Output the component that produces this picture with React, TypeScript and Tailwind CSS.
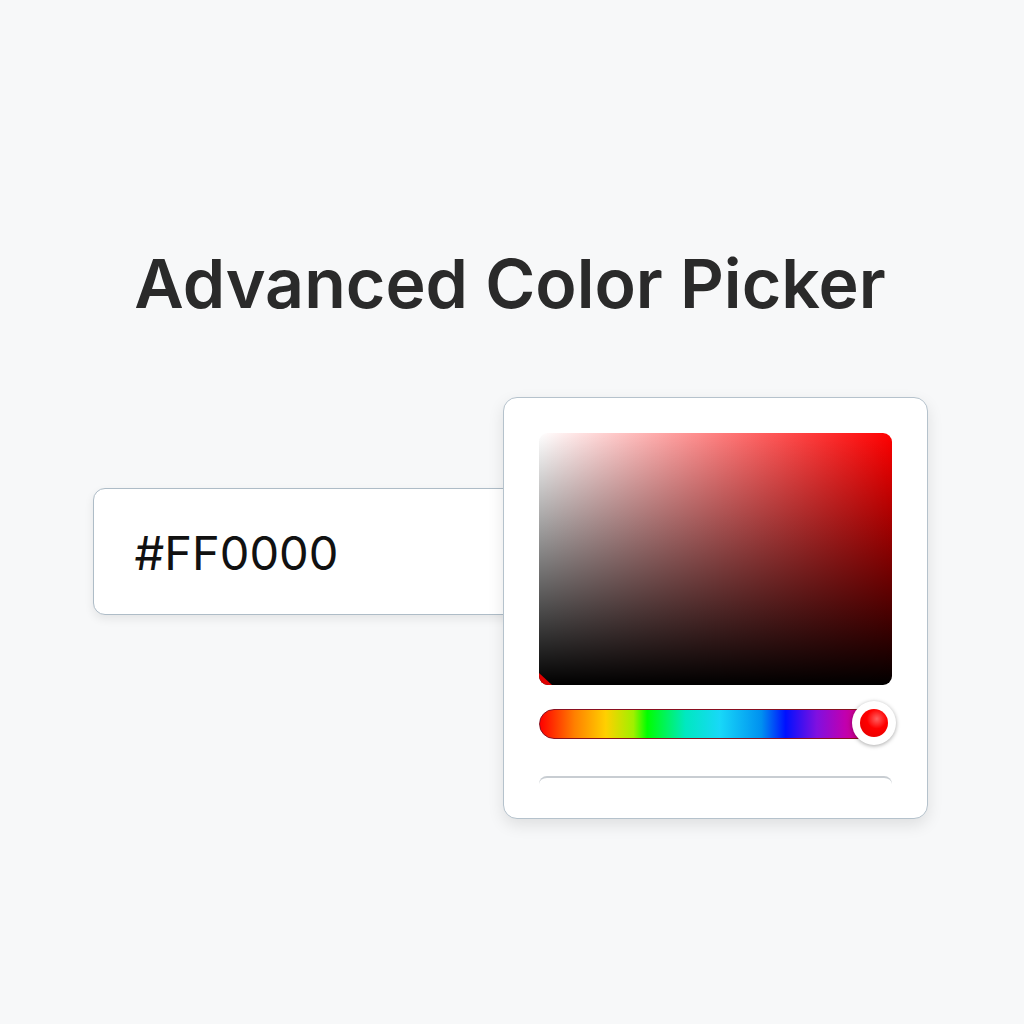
import React from "react";

export default function App() {
  return (
    <div className="min-h-[1024px] w-full bg-[#f7f8f9] flex flex-col items-center" style={{ fontFamily: "Inter, 'Noto Sans', sans-serif" }}>
      <h1 className="mt-[244px] text-[68px] leading-[78px] font-semibold text-[#2a2a2a] tracking-[0px] -translate-x-[2px]">
        Advanced Color Picker
      </h1>
      <div className="relative mt-[75px] w-[835px] h-[422px] -translate-x-[2px]">
        <div className="mt-[91px] w-[440px] h-[127px] rounded-[12px] border border-[#aebcc7] bg-white shadow-[0_4px_10px_rgba(0,0,0,0.08)] flex items-center pl-[41px]">
          <span className="text-[47px] text-[#111] font-normal tracking-[0px] translate-y-[2px]">#FF0000</span>
        </div>
        <div className="absolute right-0 top-0 w-[425px] h-[422px] rounded-[14px] border border-[#b5c2cc] bg-white shadow-[0_6px_16px_rgba(0,0,0,0.10)] px-[35px] pt-[35px]">
          <div
            className="relative w-[353px] h-[252px] rounded-[9px] overflow-hidden"
            style={{
              background:
                "linear-gradient(to top, #000 0%, rgba(0,0,0,0) 100%), linear-gradient(to right, #fff 0%, #ff0000 100%)",
            }}
          >
            <svg className="absolute left-0 bottom-0" width="14" height="14" viewBox="0 0 14 14">
              <polygon points="0,2 13,14 0,14" fill="#e00000" />
            </svg>
          </div>
          <div className="relative mt-[24px] h-[30px]">
            <div
              className="w-[348px] h-[30px] rounded-full border border-[#8a1020]"
              style={{
                background:
                  "linear-gradient(to right, #ff0000 0%, #ff8000 10%, #ffd000 19%, #a0f000 27%, #00ff00 31%, #00e8c0 42%, #18d8f8 52%, #0090f0 64%, #0010ff 71%, #8010e0 80%, #c000b0 88%, #e00060 96%, #ff0020 100%)",
              }}
            />
            <div className="absolute left-[313px] top-[-8px] w-[44px] h-[44px] rounded-full bg-white shadow-[0_1px_4px_rgba(0,0,0,0.35)] flex items-center justify-center">
              <div
                className="w-[28px] h-[28px] rounded-full"
                style={{ background: "radial-gradient(circle at 60% 35%, #ff6060 0%, #ff0000 40%, #e00000 100%)" }}
              />
            </div>
          </div>
          <div className="mt-[37px] w-[353px] h-[20px] rounded-t-[8px] border-t-2 border-[#c8cdd2]" />
        </div>
      </div>
    </div>
  );
}
